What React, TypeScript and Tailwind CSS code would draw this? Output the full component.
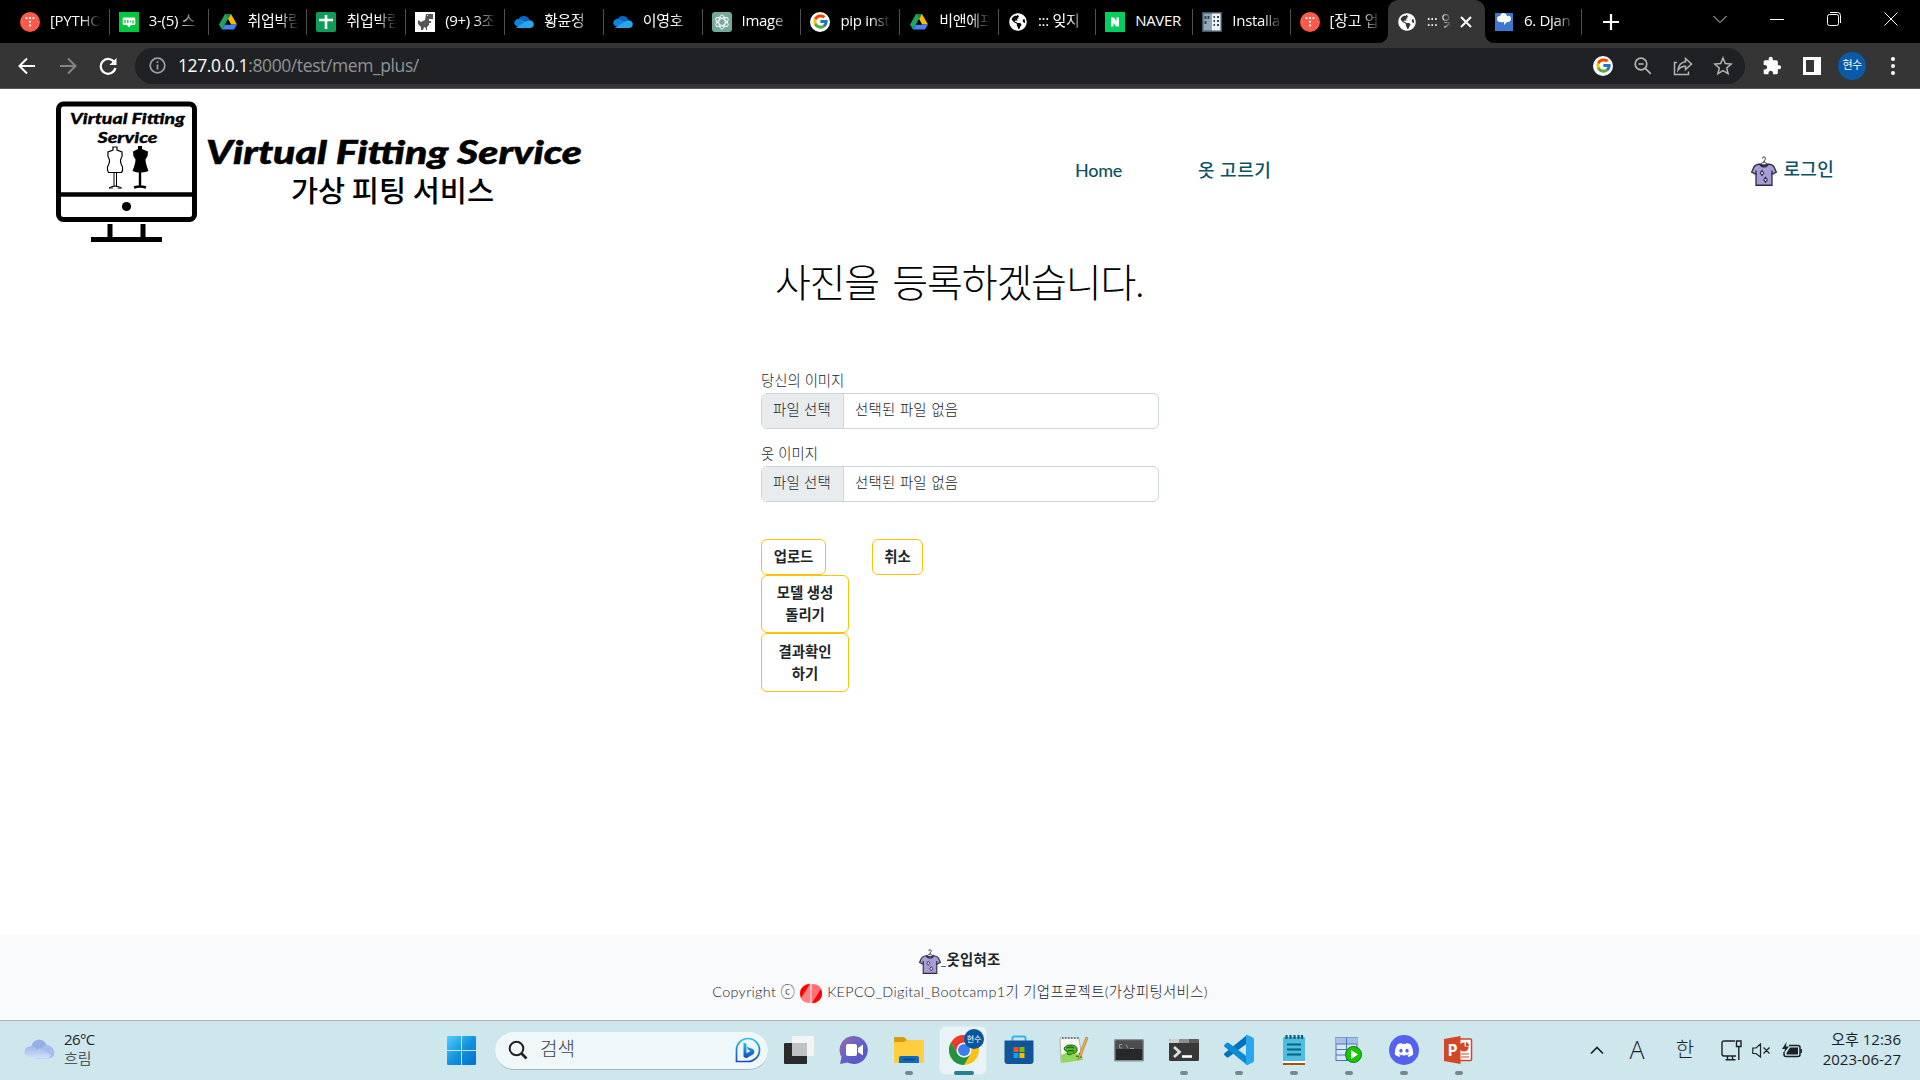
import React from 'react';
import { FcGoogle } from 'react-icons/fc';
import { FaDiscord, FaGlobeAmericas } from 'react-icons/fa';
import { MdExtension } from 'react-icons/md';

// --- 1. TAB ICONS ---
const TistoryIcon = () => (
  <svg width="20" height="20" viewBox="0 0 20 20">
    <circle cx="10" cy="10" r="10" fill="#ff5a4a" />
    <g fill="#fff">
      <circle cx="6.500" cy="6.200" r="1.100" /><circle cx="10" cy="6.200" r="1.100" /><circle cx="13.500" cy="6.200" r="1.100" />
      <circle cx="10" cy="9.800" r="1.100" /><circle cx="10" cy="13.400" r="1.100" />
    </g>
  </svg>
);

const BlogIcon = () => (
  <svg width="20" height="20" viewBox="0 0 20 20">
    <rect width="20" height="20" fill="#00c73c" />
    <path d="M5 5.500h10q1.300 0 1.300 1.300v5q0 1.300-1.300 1.300h-3L10 15.500 8 13.100H5q-1.300 0-1.300-1.300v-5Q3.700 5.500 5 5.500z" fill="#fff" />
    <path d="M6 8v3M8.800 8v3M11 9.500h1M14 8.500v3" stroke="#00c73c" strokeWidth="1.300" />
  </svg>
);

const DriveIcon = () => (
  <svg width="20" height="20" viewBox="0 0 20 20">
    <path d="M7 2h6l-6 10.500L4 17.500 1 12.500z" fill="#1da462" />
    <path d="M7 2h6l6 10.500h-6z" fill="#ffba00" />
    <path d="M7 12.500h12l-3 5H4z" fill="#4285f4" />
    <path d="M10 7.200l3 5.300H7z" fill="#000" />
    <path d="M7 2h6l-3 5.200z" fill="#0f8a4c" />
  </svg>
);

const SheetsIcon = () => (
  <svg width="20" height="20" viewBox="0 0 20 20">
    <rect width="20" height="20" rx="2" fill="#0f9d58" />
    <path d="M10 3v14M3 8h14" stroke="#fff" strokeWidth="2.600" />
  </svg>
);

const DinoIcon = () => (
  <svg width="20" height="20" viewBox="0 0 20 20">
    <rect width="20" height="20" fill="#fff" />
    <path d="M11 2h7v5h-4v2h2v2h-2v2l-2 2v3h-1v-2l-2-1-1 3H6v-3l-3-3V8l3 2 4-2z" fill="#555" />
    <rect x="12" y="3" width="1" height="1" fill="#fff" />
  </svg>
);

const OneDriveIcon = () => (
  <svg width="20" height="20" viewBox="0 0 20 20">
    <path d="M3 14q-3-1-2.500-4Q1.500 7 4.500 7q2-3.500 6-3 4 .5 5 4 4 .5 4.300 4L12 14z" fill="#0a64c0" />
    <path d="M4.500 7Q7 6.500 10 9l8 5H3q-3-1-2.500-4Q1.500 7 4.500 7z" fill="#1083dc" />
    <path d="M2 15.500l9-5.500q2-1.500 4.500-1.500 4 .5 4.300 4-.3 3-3.300 3.500H4q-1.500 0-2-.5z" fill="#2aa5ea" />
  </svg>
);

const GptIcon = () => (
  <svg width="20" height="20" viewBox="0 0 20 20">
    <rect width="20" height="20" rx="3" fill="#74aa9c" />
    <g fill="none" stroke="#fff" strokeWidth=".9">
      <ellipse cx="10" cy="10" rx="3.200" ry="7" />
      <ellipse cx="10" cy="10" rx="3.200" ry="7" transform="rotate(60 10 10)" />
      <ellipse cx="10" cy="10" rx="3.200" ry="7" transform="rotate(120 10 10)" />
    </g>
  </svg>
);

const GoogleIcon = () => (
  <span className="flex size-5 items-center justify-center rounded-full bg-white">
    <FcGoogle size={17} />
  </span>
);

const GlobeIcon = () => <FaGlobeAmericas size={18} color="#fff" />;

const NaverIcon = () => (
  <svg width="20" height="20" viewBox="0 0 20 20">
    <rect width="20" height="20" fill="#03cf5d" />
    <path d="M6 5.500h3l2.500 3.800V5.500H14v9h-3l-2.500-3.800v3.800H6z" fill="#fff" />
  </svg>
);

const BuildingIcon = () => (
  <svg width="20" height="20" viewBox="0 0 20 20">
    <rect width="20" height="20" fill="#44586a" />
    <rect x="1.500" y="1.500" width="7.500" height="17" fill="#90a8b8" />
    <rect x="9.500" y="1.500" width="9" height="17" fill="#eef2f5" />
    <path d="M3.500 4v3M6.500 4v3M3.500 9v3M11.500 5H13M15 5h2M11.500 9H13M15 9h2M11.500 13H13M15 13h2" stroke="#33475a" strokeWidth="2" />
  </svg>
);

const WikiDocsIcon = () => (
  <svg width="20" height="20" viewBox="0 0 20 20">
    <rect x="1" y="1" width="18" height="18" fill="#3d78d0" />
    <path d="M7 2q3-2 5 0l1 2q4-1 4 3 0 3-4 3l-3 3v-3q-7 1-7-3 0-3 3-3z" fill="#fff" />
  </svg>
);

// --- 2. DATA ---
const TABS = [
  { icon: <TistoryIcon />, title: '[PYTHO' },
  { icon: <BlogIcon />, title: '3-(5) 스' },
  { icon: <DriveIcon />, title: '취업박람' },
  { icon: <SheetsIcon />, title: '취업박람' },
  { icon: <DinoIcon />, title: '(9+) 3조' },
  { icon: <OneDriveIcon />, title: '황윤정' },
  { icon: <OneDriveIcon />, title: '이영호' },
  { icon: <GptIcon />, title: 'Image' },
  { icon: <GoogleIcon />, title: 'pip inst' },
  { icon: <DriveIcon />, title: '비앤에프' },
  { icon: <GlobeIcon />, title: '::: 잊지' },
  { icon: <NaverIcon />, title: 'NAVER', solid: true },
  { icon: <BuildingIcon />, title: 'Installa' },
  { icon: <TistoryIcon />, title: '[장고 업' },
  { icon: <GlobeIcon />, title: '::: 잊', active: true },
  { icon: <WikiDocsIcon />, title: '6. Djan' },
];

const UI_FONT = "font-['Open_Sans','Noto_Sans_CJK_KR',sans-serif]";

// --- 3. BROWSER ---
interface TabProps {
  icon: React.ReactNode;
  title: string;
  active?: boolean;
  solid?: boolean;
  wide: boolean;
  beforeActive: boolean;
}

const Tab: React.FC<TabProps> = ({ icon, title, active, solid, wide, beforeActive }) => (
  <div className={`relative flex h-[43px] shrink-0 items-center pl-[9px] ${wide ? 'w-[98.800px]' : 'w-[97.200px]'} ${active ? 'rounded-t-[10px] bg-[#353535]' : ''}`}>
    <span className="flex size-5 shrink-0 items-center justify-center">{icon}</span>
    <span className={`mb-[3px] ml-2.5 overflow-hidden whitespace-nowrap text-[15px] leading-6 tracking-[-0.3px] text-white ${solid ? '' : '[mask-image:linear-gradient(to_right,#000_60%,transparent)]'} ${active ? 'w-[24px]' : 'w-[51px]'}`}>
      {title}
    </span>
    {active && (
      <svg className="ml-[9px] shrink-0" width="12" height="12" viewBox="0 0 12 12" stroke="#fff" strokeWidth="2"><path d="M1 1l10 10M11 1L1 11" /></svg>
    )}
    {!active && !beforeActive && <span className="absolute right-0 top-[9px] h-[26px] w-px bg-[#505050]" />}
    {active && (
      <>
        <span className="absolute bottom-0 -left-2.5 size-2.5 bg-[radial-gradient(circle_at_0_0,transparent_10px,#353535_10.500px)]" />
        <span className="absolute bottom-0 -right-2.5 size-2.5 bg-[radial-gradient(circle_at_100%_0,transparent_10px,#353535_10.500px)]" />
      </>
    )}
  </div>
);

const TabStrip = () => (
  <div className="flex h-[43px] items-center bg-black pl-[11px]">
    {TABS.map((t, i) => (
      <Tab key={i} {...t} wide={i < 10} beforeActive={!!TABS[i + 1]?.active} />
    ))}
    <svg className="ml-[21px]" width="16" height="16" viewBox="0 0 16 16" stroke="#fff" strokeWidth="2.200"><path d="M8 0v16M0 8h16" /></svg>
    <div className="mb-[6px] ml-auto mr-[22px] flex items-center gap-[43px]">
      <svg width="14" height="14" viewBox="0 0 14 14" fill="none" stroke="#ddd"><path d="M.5 4L7 10.500 13.500 4" /></svg>
      <svg width="14" height="14" viewBox="0 0 14 14" stroke="#fff"><path d="M0 7.500h14" /></svg>
      <svg width="14" height="14" viewBox="0 0 14 14" fill="none" stroke="#fff"><rect x=".5" y="2.500" width="11" height="11" rx="2" /><path d="M3 .5h7.500q3 0 3 3V11" /></svg>
      <svg width="14" height="14" viewBox="0 0 14 14" stroke="#fff"><path d="M.5.5l13 13M13.500.5l-13 13" /></svg>
    </div>
  </div>
);

const Toolbar = () => (
  <div className="flex h-[46px] items-center border-b border-[#5a5a5a] bg-[#353535] pl-[18px] pr-[19px]">
    <svg width="18" height="18" viewBox="0 0 18 18" fill="none" stroke="#fff" strokeWidth="2"><path d="M17 9H2M9 1.500L1.500 9 9 16.500" /></svg>
    <svg className="ml-[23px]" width="18" height="18" viewBox="0 0 18 18" fill="none" stroke="#858585" strokeWidth="2"><path d="M1 9h15M9 1.500L16.500 9 9 16.500" /></svg>
    <svg className="ml-[22px]" width="18" height="18" viewBox="0 0 18 18" fill="none" stroke="#fff" strokeWidth="2.200"><path d="M15.500 5.500A7.400 7.400 0 1 0 16.400 11" /><path d="M17.500 1v7h-7z" fill="#fff" stroke="none" /></svg>
    <div className="ml-[18px] flex h-[36px] w-[1610px] items-center rounded-full bg-[#202124] pl-[14px] pr-[12px]">
      <svg width="17" height="17" viewBox="0 0 17 17" fill="none" stroke="#9aa0a6" strokeWidth="1.700"><circle cx="8.500" cy="8.500" r="7.300" /><path d="M8.500 7.500v5M8.500 4.300v1.800" /></svg>
      <span className="mb-0.5 ml-3 text-[17.500px] leading-6 tracking-[-0.4px] text-[#909498]"><span className="text-white">127.0.0.1</span>:8000/test/mem_plus/</span>
      <div className="ml-auto flex items-center gap-5">
        <GoogleIcon />
        <svg width="20" height="20" viewBox="0 0 20 20" fill="none" stroke="#b4b4b4" strokeWidth="1.700"><circle cx="8" cy="8" r="5.800" /><path d="M12.300 12.300l5.500 5.500M5.300 8h5.400" /></svg>
        <svg width="20" height="20" viewBox="0 0 20 20" fill="none" stroke="#b4b4b4" strokeWidth="1.500"><path d="M4 6.500H1.500v12h14v-3" /><path d="M12.500 2.500l6 5.500-6 5.500v-3.300q-4.500-.2-7.500 3.800.8-7.300 7.500-8.200z" /></svg>
        <svg width="20" height="20" viewBox="0 0 20 20" fill="none" stroke="#b4b4b4" strokeWidth="1.500"><path d="M10 2l2.300 5.500 5.900.5-4.500 3.900 1.400 5.800-5.100-3.100-5.100 3.100 1.400-5.800L1.800 8l5.900-.5z" /></svg>
      </div>
    </div>
    <MdExtension className="ml-[17px]" size={20} color="#fff" />
    <svg className="ml-[21px]" width="18" height="18" viewBox="0 0 18 18"><rect width="18" height="18" fill="#fff" /><rect x="3" y="3" width="8" height="12" fill="#353535" /></svg>
    <span className="ml-[17px] flex size-7 items-center justify-center rounded-full bg-[#0a5aa8] text-[11px] tracking-[-0.5px] text-white">현수</span>
    <svg className="ml-auto mr-[6px]" width="4" height="18" viewBox="0 0 4 18" fill="#fff"><circle cx="2" cy="2" r="2" /><circle cx="2" cy="9" r="2" /><circle cx="2" cy="16" r="2" /></svg>
  </div>
);

// --- 4. PAGE ---
const ShirtIcon: React.FC<{ width: number; height: number }> = ({ width, height }) => (
  <svg width={width} height={height} viewBox="0 0 26 29" preserveAspectRatio="none" fill="none" stroke="#2c2a3c" strokeWidth="1.300">
    <path d="M11.500 2.500Q11.500.8 13 .8t1.500 1.700q0 1.200-1.500 2v2M13 5.500L8.500 8.500h9z" strokeWidth=".9" />
    <path d="M8.500 7.800q4.500 3 9 0 4 .2 5.500 2.700l2.300 5-4.300 2.200v10.600H5V17.700L.7 15.500l2.300-5q1.500-2.500 5.500-2.700z" fill="#a79bd8" />
    <path d="M8.500 8q4.500 5.500 9 0M5 18v-4M21 18v-4" />
    <path d="M11 14l1.800 2.500L11 19l-1.800-2.500zM14.500 20.500l1.800 2.500-1.800 2.500-1.800-2.500z" fill="#ddd8f5" strokeWidth="1" />
  </svg>
);

const Logo = () => (
  <svg width="535" height="146" viewBox="0 0 535 146" role="img">
    <g fill="none" stroke="#000">
      <rect x="8.500" y="5" width="136" height="115.500" rx="5" strokeWidth="5" />
      <path d="M8 95.500h138" strokeWidth="4.500" />
      <path d="M60 125v13M93 125v13" strokeWidth="5" />
      <path d="M41 140.500h71" strokeWidth="5" />
    </g>
    <circle cx="76.500" cy="107.500" r="4.600" />
    <g className="font-['Lato',sans-serif]" fontWeight="900" fontStyle="italic" stroke="#000">
      <text x="20" y="25" fontSize="15" textLength="115" strokeWidth=".3" lengthAdjust="spacingAndGlyphs">Virtual Fitting</text>
      <text x="47.500" y="43.500" fontSize="15" textLength="60" strokeWidth=".3" lengthAdjust="spacingAndGlyphs">Service</text>
      <text x="156" y="65" fontSize="33" textLength="376" strokeWidth=".5" lengthAdjust="spacingAndGlyphs">Virtual Fitting Service</text>
    </g>
    <text x="241" y="103" className="font-['Noto_Sans_CJK_KR',sans-serif]" fontWeight="500" fontSize="29" textLength="203" lengthAdjust="spacingAndGlyphs">가상 피팅 서비스</text>
    <path d="M63 48h4v3l5 2q1 4-1.500 8-.5 3 2 7 .5 4-1 5.500H58.500q-1.500-2-1-5.500 2.500-4 2-7Q57 57 58 53l5-2z" fill="#fff" stroke="#000" strokeWidth="1.200" />
    <path d="M64 74v14M66.500 74v14M59 89q6-4 12.500 0M59 89h4M67.500 89h4" fill="none" stroke="#000" />
    <path d="M88 47h4v3l6 2.500q.5 4-2.500 8 0 4 3 11.500-8.500 3-16 0 3-7.500 3-11.500-3-4-2.500-8L88 50z" />
    <path d="M90 72v16M84 88.500q6-2 12 0" fill="none" stroke="#000" strokeWidth="2.400" />
  </svg>
);

const Header = () => (
  <header className="flex h-[158px] items-start pl-[50px] pr-[86px] pt-[9px] text-[18px] font-medium leading-6 text-[#0b5364]">
    <div className="mt-[0.500px] w-[530px] shrink-0"><Logo /></div>
    <nav className="ml-[495px] mt-[60px] flex">
      <a className="w-[123px] tracking-[-0.3px]">Home</a>
      <a className="whitespace-nowrap tracking-[0.5px]">옷 고르기</a>
    </nav>
    <a className="ml-auto mt-[58px] flex items-center gap-[6px]">
      <ShirtIcon width={26} height={30} />
      <span className="mb-1 tracking-[0.3px]">로그인</span>
    </a>
  </header>
);

const FileField: React.FC<{ label: string }> = ({ label }) => (
  <div>
    <label className="block h-[21px] text-[14.400px] leading-[18px]">{label}</label>
    <div className="flex h-9 overflow-hidden rounded-md border border-[#ced4da] leading-[32px] tracking-[0.2px]">
      <span className="w-[82px] border-r border-[#ced4da] bg-[#e9ecef] pl-[11px]">파일 선택</span>
      <span className="pl-[11px] [word-spacing:0.500px]">선택된 파일 없음</span>
    </div>
  </div>
);

const BTN = 'rounded-md border border-[#ffc107] bg-white text-center text-[14.400px] font-bold leading-[21.600px] text-[#212529]';

const UploadForm = () => (
  <main className="flex flex-1 flex-col items-center">
    <h1 className="mr-[2px] mt-[7px] text-[39px] font-light leading-[56px] tracking-[-1.200px] text-black [word-spacing:4px]">사진을 등록하겠습니다.</h1>
    <form className="mt-[62px] w-[398px] text-[14.400px] font-light text-[#212529]">
      <FileField label="당신의 이미지" />
      <div className="mt-[16px]"><FileField label="옷 이미지" /></div>
      <div className="mt-[37px] flex">
        <div className="w-[111px]"><button type="button" className={`${BTN} h-9 w-[65px]`}>업로드</button></div>
        <button type="button" className={`${BTN} h-9 w-[51px]`}>취소</button>
      </div>
      <div className="flex w-[88px] flex-col">
        <button type="button" className={`${BTN} h-[58px]`}>모델 생성<br />돌리기</button>
        <button type="button" className={`${BTN} h-[59px]`}>결과확인<br />하기</button>
      </div>
    </form>
  </main>
);

const KepcoIcon = () => (
  <svg width="22" height="21" viewBox="0 0 22 21">
    <path d="M10.500 1v19Q0 20 0 11q0-4 3-7.500T10.500 1z" fill="#ff8080" />
    <path d="M11.500 20V1Q22 1 22 10q0 4-3 7.500T11.500 20z" fill="#ff7070" />
    <path d="M10 1L1 15Q-2 7 4 3q3-2 6-2zM12 20l9-14q3 8-3 12-3 2-6 2z" fill="#f00" />
  </svg>
);

const Footer = () => (
  <footer className="flex h-[85px] flex-col items-center bg-[#f8fafc] pt-[14px] text-[14.400px] text-[#212529]">
    <div className="flex h-[28px] items-start">
      <ShirtIcon width={22} height={25} />
      <span className="mt-[17px] h-px w-[5px] bg-[#0d6efd]" />
      <span className="mt-px font-bold leading-[20px] tracking-[0.3px]">옷입혀조</span>
    </div>
    <div className="flex h-[30px] items-center whitespace-nowrap font-light tracking-[0.33px]">
      <span>Copyright ⓒ</span>
      <span className="mx-[5px] mt-[3px]"><KepcoIcon /></span>
      <span>KEPCO_Digital_Bootcamp1기 기업프로젝트(가상피팅서비스)</span>
    </div>
  </footer>
);

// --- 5. TASKBAR ---
const TaskViewIcon = () => (
  <svg width="30" height="30" viewBox="0 0 30 30">
    <rect x="0" y="8" width="23" height="21" rx="1" fill="#2b2b2b" />
    <rect x="8" y="1" width="22" height="20" rx="1" fill="#f4f4f4" />
    <rect x="8" y="8" width="15" height="13" fill="#bfc2c2" />
  </svg>
);

const ChatIcon = () => (
  <svg width="30" height="30" viewBox="0 0 30 30">
    <defs><linearGradient id="chat" x1="0" y1="0" x2="1" y2="1"><stop offset="0" stopColor="#9a6ba8" /><stop offset=".5" stopColor="#6460c8" /><stop offset="1" stopColor="#5b50c0" /></linearGradient></defs>
    <path d="M15 1a14 14 0 1 1-6.500 26.500L1 29l1.500-7A14 14 0 0 1 15 1z" fill="url(#chat)" />
    <rect x="7" y="9" width="11" height="12" rx="2" fill="#fff" />
    <path d="M19 13l5-3.500v11L19 17z" fill="#fff" />
  </svg>
);

const FolderIcon = () => (
  <svg width="30" height="30" viewBox="0 0 30 30">
    <path d="M0 3q0-1 1-1h9l3 3v5H0z" fill="#dc9b0a" />
    <path d="M0 7h10l3-2h16q1 0 1 1v22H0z" fill="#ffce3e" />
    <path d="M5 28v-5q0-2 2-2h16q2 0 2 2v5z" fill="#0f6cbd" />
    <path d="M9 24.500h12" stroke="#06468a" strokeWidth="1.500" />
  </svg>
);

const ChromeIcon = () => (
  <svg width="30" height="30" viewBox="0 0 30 30">
    <circle cx="15" cy="15" r="15" fill="#fbc116" />
    <path d="M15 7.500h13A15 15 0 0 0 2 7.500l6.500 11z" fill="#ea3b2e" />
    <path d="M2 7.500A15 15 0 0 0 15 30l6.500-11.200-6.500 3.700-6.500-3.800z" fill="#229342" />
    <circle cx="15" cy="15" r="7.500" fill="#fff" />
    <circle cx="15" cy="15" r="6" fill="#3b7ded" />
  </svg>
);

const StoreIcon = () => (
  <svg width="30" height="30" viewBox="0 0 30 30">
    <path d="M8.500 7V3q0-1.500 1.500-1.500h10q1.500 0 1.500 1.500v4" fill="none" stroke="#31b5f0" strokeWidth="2" />
    <path d="M.5 5.500h29V26q0 3-3 3h-23q-3 0-3-3z" fill="#10559a" />
    <rect x="9.500" y="12" width="5" height="5" fill="#f25022" /><rect x="15.500" y="12" width="5" height="5" fill="#7fba00" />
    <rect x="9.500" y="18" width="5" height="5" fill="#00a4ef" /><rect x="15.500" y="18" width="5" height="5" fill="#ffb900" />
  </svg>
);

const NotepadPlusIcon = () => (
  <svg width="30" height="30" viewBox="0 0 30 30">
    <path d="M1 3h19l3 21-21 3z" fill="#f6f6f2" stroke="#999" strokeWidth=".7" />
    <path d="M2 20q10-5 21 1l.5 4L2.500 28z" fill="#8fd95a" />
    <path d="M5 13q3-4 8-3 5 .5 5 4 1 3-2 4-3 0-5 2l-3-1 1-2q-4-1-4-4z" fill="#4fb52a" stroke="#286b17" strokeWidth="1" />
    <path d="M8 13q3-2 7 0M9 16q3-1 6 0M17 21l5 1-2-4" fill="none" stroke="#1d5512" strokeWidth="1.200" />
    <path d="M3 3h18" stroke="#777" strokeWidth="2" strokeDasharray="1.500 1.500" />
    <path d="M27 2L20 20l-1 5 3-4L29 3z" fill="#f2b23c" stroke="#a86c23" strokeWidth=".6" />
  </svg>
);

const CmdIcon = () => (
  <svg width="30" height="30" viewBox="0 0 30 30">
    <rect x=".7" y="4.700" width="28.600" height="21" rx="1" fill="#26282a" stroke="#8e9294" strokeWidth="1.600" />
    <rect x="2" y="6" width="26" height="8" fill="#4b4e50" />
    <path d="M8 9.500H5.500V13H8M10 9.500v.1M10 13v.1M12 9.500l2 4M16 13.500h4" fill="none" stroke="#999" strokeWidth=".9" />
  </svg>
);

const TerminalIcon = () => (
  <svg width="30" height="30" viewBox="0 0 30 30">
    <rect y="4" width="30" height="22" rx="1.500" fill="#383838" />
    <path d="M0 8V5.500Q0 4 1.500 4H10v4z" fill="#cfcfcf" /><path d="M10 4h10v4H10z" fill="#8d8d8d" /><path d="M20 4h8.500Q30 4 30 5.500V8H20z" fill="#5c5c5c" />
    <path d="M5 12l5.500 5L5 22" fill="none" stroke="#dcdcdc" strokeWidth="2.800" /><path d="M13 21.500h10" stroke="#fff" strokeWidth="2.600" />
  </svg>
);

const CodeIcon = () => (
  <svg width="30" height="30" viewBox="0 0 30 30">
    <path d="M23 0v8.500L4.500 22.300Q3.500 23 2.500 22l-2-1.800q-1-1 0-2z" fill="#0072b8" />
    <path d="M23 30v-8.500L4.500 7.700Q3.500 7 2.500 8l-2 1.800q-1 1 0 2z" fill="#0f8ad5" />
    <path d="M22 0q1-.3 2 .2l4.800 2.300q1.200.6 1.200 2v21q0 1.400-1.200 2L24 29.800q-1 .5-2 .2V0z" fill="#29a7ee" />
  </svg>
);

const NotepadIcon = () => (
  <svg width="30" height="30" viewBox="0 0 30 30">
    <rect x="4" y="27" width="22" height="3" fill="#a65306" /><rect x="4" y="26" width="22" height="2" fill="#fff" />
    <rect x="4" y="2" width="22" height="24" rx="1" fill="#4dbde0" />
    <path d="M8 9.500h14M8 14.500h14M8 19.500h14" stroke="#08637f" strokeWidth="1.800" />
    <path d="M7.500 0v4M11.500 0v4M15.500 0v4M19.500 0v4M23 0v4" stroke="#0c5d77" strokeWidth="2.200" />
  </svg>
);

const DbIcon = () => (
  <svg width="30" height="30" viewBox="0 0 30 30">
    <rect x="2" y="2.500" width="21" height="23" fill="#dbe6f7" stroke="#4d74bb" />
    <rect x="2" y="2.500" width="21" height="6.500" fill="#a9c0e6" />
    <path d="M2 9h21M2 14.500h21M2 20h21M12.500 2.500v23" stroke="#4d74bb" />
    <circle cx="19.500" cy="19.500" r="8" fill="#18c700" stroke="#12771a" />
    <path d="M17 15l7 4.500-7 4.500z" fill="#fff" />
  </svg>
);

const DiscordIcon = () => (
  <span className="flex size-[30px] items-center justify-center rounded-full bg-[#5562ef]"><FaDiscord size={20} color="#fff" /></span>
);

const PowerPointIcon = () => (
  <svg width="30" height="30" viewBox="0 0 30 30">
    <rect x="14" y="4" width="13.500" height="21.500" rx="1" fill="#fff" stroke="#d24726" strokeWidth="1.500" />
    <path d="M20 8a4 4 0 1 0 4 4h-4zM17 19h8M17 22h8" fill="#d24726" stroke="#d24726" strokeWidth="1.200" />
    <path d="M22 7v4h3q0-3-3-4z" fill="#d24726" />
    <path d="M0 4l16.500-3v28L0 26z" fill="#d24726" />
    <text x="3.500" y="21" fontSize="16" fontWeight="700" fill="#fff">P</text>
  </svg>
);

const APPS = [
  { icon: <TaskViewIcon />, running: false },
  { icon: <ChatIcon />, running: false },
  { icon: <FolderIcon />, running: true },
  { icon: <ChromeIcon />, running: true, active: true },
  { icon: <StoreIcon />, running: false },
  { icon: <NotepadPlusIcon />, running: false },
  { icon: <CmdIcon />, running: false },
  { icon: <TerminalIcon />, running: true },
  { icon: <CodeIcon />, running: true },
  { icon: <NotepadIcon />, running: true },
  { icon: <DbIcon />, running: true },
  { icon: <DiscordIcon />, running: true },
  { icon: <PowerPointIcon />, running: true },
];

const Weather = () => (
  <div className="mb-[3px] flex w-[447px] items-center pl-[24px] text-[15px] leading-[19px] text-[#1c2427]">
    <svg width="31" height="20" viewBox="0 0 31 20">
      <defs><linearGradient id="cloud" x1="0" y1="0" x2="0" y2="1"><stop offset="0" stopColor="#9db8ec" /><stop offset="1" stopColor="#d3e1fa" /></linearGradient></defs>
      <path d="M7 9Q8 1 15 .5 22 1 23 8l-8 8z" fill="#93afe6" />
      <path d="M17 10q1-4 6-4 6 1 7.500 7 0 6-7 6.500H12z" fill="#a3bbee" />
      <path d="M7 19Q0 18 .5 12.500 1 7.500 7 7.500q4 0 6 3 2-2 5-1 3 1 4 4 4 0 5 3-1 2.500-4 3z" fill="url(#cloud)" />
    </svg>
    <div className="ml-[9px] tracking-[-0.6px]"><div>26°C</div><div className="tracking-normal text-[#4d585c]">흐림</div></div>
  </div>
);

const StartIcon = () => (
  <svg width="29" height="29" viewBox="0 0 29 29">
    <defs><linearGradient id="win" x1="0" y1="0" x2="1" y2="1"><stop offset="0" stopColor="#4fd0ff" /><stop offset=".5" stopColor="#1593e0" /><stop offset="1" stopColor="#0070cc" /></linearGradient></defs>
    <path d="M0 1q0-1 1-1h13v14H0zM15 0h13q1 0 1 1v13H15zM0 15h14v14H1q-1 0-1-1zM15 15h14v13q0 1-1 1H15z" fill="url(#win)" />
  </svg>
);

const SearchBox = () => (
  <div className="ml-[19px] flex h-[38px] w-[273px] items-center rounded-full border-b border-[#9fb9c0] bg-[#f0f7f9] pl-[13px] pr-[7px]">
    <svg width="20" height="20" viewBox="0 0 20 20" fill="none" stroke="#222" strokeWidth="2"><circle cx="8.500" cy="8.500" r="6.800" /><path d="M13.500 13.500l5 5" strokeWidth="2.600" /></svg>
    <span className="mb-0.5 ml-[12px] text-[19px] font-light leading-6 text-[#3c4447]">검색</span>
    <svg className="ml-auto" width="26" height="26" viewBox="0 0 26 26" fill="none">
      <defs><linearGradient id="bing" x1="0" y1="0" x2="0" y2="1"><stop offset="0" stopColor="#25c0ea" /><stop offset="1" stopColor="#1748c5" /></linearGradient></defs>
      <path d="M13 1.500A11.500 11.500 0 1 1 13 24.500H1.500V13A11.500 11.500 0 0 1 13 1.500z" stroke="url(#bing)" strokeWidth="1.700" />
      <path d="M8.500 5.500l3 1.200v9.500l4-2.200-2.500-1.300-1.200-3 6 2.300q2 1.200 1.500 3.500-.3 1.300-1.500 2l-6 3.500q-1.500.5-3.300-1.500z" fill="url(#bing)" />
    </svg>
  </div>
);

const Tray = () => (
  <div className="ml-auto flex h-full items-center pr-[19px] text-[#1b2225]">
    <svg width="14" height="9" viewBox="0 0 14 9" fill="none" stroke="currentColor" strokeWidth="1.700"><path d="M1 7.500l6-6 6 6" /></svg>
    <span className="mb-[3px] ml-[17px] w-[32px] text-center text-[25px] font-light leading-8">A</span>
    <span className="mb-[2px] ml-[16px] w-[32px] text-center text-[20px] font-light leading-8">한</span>
    <svg className="ml-[20px]" width="21" height="21" viewBox="0 0 21 21" fill="none" stroke="currentColor" strokeWidth="1.400"><path d="M14 1H3Q1 1 1 3v11q0 2 2 2h12M6.500 16v3.500M11.500 16v3.500M4.500 19.800h10" /><path d="M15.500 1h4.500v5.500h-4.500zM17.800 7v13" /></svg>
    <svg className="ml-[10px]" width="19" height="15" viewBox="0 0 19 15" fill="none" stroke="currentColor" strokeWidth="1.200"><path d="M.8 5H4l4.500-4v13L4 10.500H.8zM11.500 4.500l6 6M17.500 4.500l-6 6" /></svg>
    <svg className="ml-[11px]" width="21" height="17" viewBox="0 0 21 17"><path d="M7 3.500h9q2 0 2 2v7q0 2-2 2H4q-2 0-2-2V10" fill="none" stroke="currentColor" strokeWidth="1.500" /><path d="M8 5.500h8v7H4.500V11zM18.500 7H20v4h-1.500zM4.500 0L0 7h3l-1 4 5-6.500H4z" fill="currentColor" /></svg>
    <div className="mb-[3px] ml-[17px] w-[81px] whitespace-nowrap text-right text-[15px] leading-[20px]"><div>오후 12:36</div><div>2023-06-27</div></div>
  </div>
);

const Taskbar = () => (
  <div className="flex h-[60px] items-center border-t border-[#a5b7bc] bg-[#cee7ed] text-[#111]">
    <Weather />
    <StartIcon />
    <SearchBox />
    <div className="ml-[3px] flex h-full">
      {APPS.map((app, i) => (
        <div key={i} className="relative mb-px flex w-[55px] items-center justify-center">
          {app.active && <span className="absolute left-[3px] top-[5px] h-[49px] w-[48px] rounded-md border border-[#dce9ed] bg-[#e7f3f7]" />}
          <span className="relative">{app.icon}</span>
          {app.active && <span className="absolute left-[28px] top-[8px] flex size-5 items-center justify-center rounded-full bg-[#08569d] text-[8px] text-white">현수</span>}
          {app.running && <span className={`absolute bottom-[4px] h-1 rounded-full ${app.active ? 'w-5 bg-[#25808f]' : 'w-2 bg-[#7a888c]'}`} />}
        </div>
      ))}
    </div>
    <Tray />
  </div>
);

// --- 6. APP ---
export default function App() {
  return (
    <div className={`flex h-[1080px] w-[1920px] flex-col overflow-hidden bg-white ${UI_FONT}`}>
      <TabStrip />
      <Toolbar />
      <div className="flex flex-1 flex-col font-['Lato','Noto_Sans_CJK_KR',sans-serif]">
        <Header />
        <UploadForm />
        <Footer />
      </div>
      <Taskbar />
    </div>
  );
}
